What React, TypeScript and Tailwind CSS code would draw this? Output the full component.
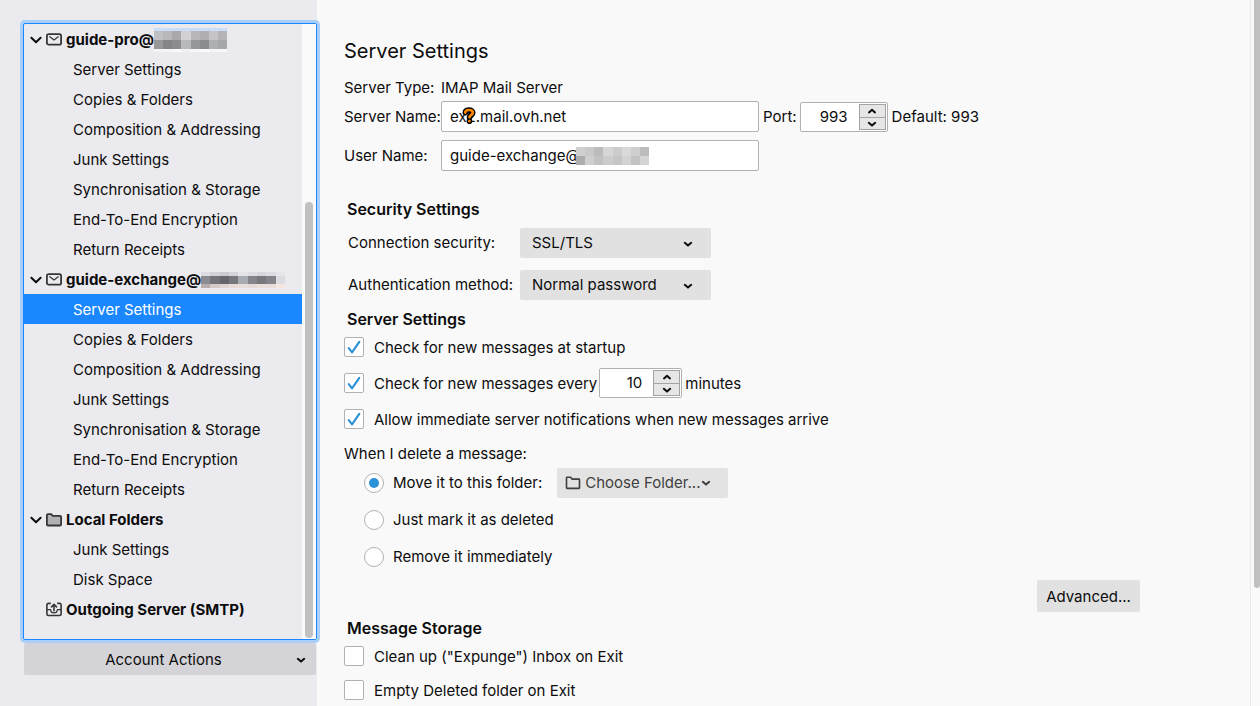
import { useState } from "react";
import type { ReactNode } from "react";

type IconKind = "mail" | "folder" | "outgoing";

type Account = {
  id: string;
  name: string;
  icon: IconKind;
  open?: boolean;
  mask?: ReactNode;
  pages: string[];
};

function Chevron({ className = "", up = false, wide = false }: { className?: string; up?: boolean; wide?: boolean }) {
  return (
    <svg
      viewBox="0 0 12 12"
      className={className}
      fill="none"
      stroke="currentColor"
      strokeWidth="2"
      strokeLinecap="round"
      strokeLinejoin="round"
      aria-hidden="true"
    >
      {wide ? <path d="M1.4 3.8 6 8.3l4.6-4.5" /> : <path d={up ? "M3 7.4 6 4.8l3 2.6" : "M2.8 4.8 6 7.6l3.2-2.8"} />}
    </svg>
  );
}

function AccountIcon({ kind }: { kind: IconKind }) {
  return (
    <svg viewBox="0 0 16 16" className="h-4 w-4 shrink-0" fill="none" stroke="#363638" strokeWidth="1.8" strokeLinejoin="round" strokeLinecap="round" aria-hidden="true">
      {kind === "mail" && (
        <>
          <rect x="0.9" y="2.1" width="14.2" height="10.6" rx="1.8" />
          <path d="M3.8 4.700 8 7.900 12.200 4.700" strokeWidth="1.2" />
        </>
      )}
      {kind === "folder" && (
        <path d="M.9 12.4V3.2c0-.7.4-1.1 1.1-1.1h3.2l1.6 1.7H14c.7 0 1.1.4 1.1 1.1v7.5c0 .7-.4 1.1-1.1 1.1H2c-.7 0-1.1-.4-1.1-1.1Z" fill="#b1b1b3" />
      )}
      {kind === "outgoing" && (
        <>
          <path d="M4.2 1.4H2.400C1.400 1.400.9 1.900.9 2.800v9.300c0 .9.5 1.400 1.500 1.400h11.200c1 0 1.500-.5 1.500-1.400V2.800c0-.9-.5-1.400-1.500-1.400h-1.800" strokeWidth="1.600" />
          <path d="M8 8.800V2.800M5.500 4.900 8 2.400l2.500 2.500" strokeWidth="1.600" />
          <path d="M1 7.600h3.300c.4 0 .5.3.5.7 0 1.500 1.400 2.600 3.200 2.600s3.200-1.100 3.200-2.600c0-.4.1-.7.5-.7H15" strokeWidth="1.200" />
        </>
      )}
    </svg>
  );
}

function Mosaic({ rows, heights, className }: { rows: string[][]; heights: number[]; className: string }) {
  const total = heights.reduce((a, b) => a + b, 0);
  const cols = Math.max(...rows.map((r) => r.length));
  let y = 0;
  return (
    <svg viewBox={`0 0 ${cols * 9} ${total}`} preserveAspectRatio="none" shapeRendering="crispEdges" className={className} aria-hidden="true">
      {rows.map((row, r) => {
        const top = y;
        y += heights[r];
        return row.map((c, i) => <rect key={`${r}-${i}`} x={i * 9} y={top} width="9" height={heights[r]} fill={c} />);
      })}
    </svg>
  );
}

const proMask = (
  <Mosaic
    className="h-6 w-[73px] shrink-0"
    heights={[3, 9, 9, 3]}
    rows={[
      ["#c9ddf8", "#c9ddf8", "#c9ddf8", "#c9ddf8", "#c9ddf8", "#c9ddf8", "#c9ddf8", "#c9ddf8"],
      ["#c0bfc1", "#b9b7b9", "#aaa8ab", "#d2d0d2", "#b8b6b8", "#b0aeb0", "#c6c4c6", "#b5b3b5"],
      ["#98989b", "#858588", "#8c8c8f", "#b8b9bd", "#97989b", "#8b8c8f", "#adafb1", "#a6a8aa"],
      ["#f3f2f6", "#f5f4f8", "#fafafe", "#f1f0f4", "#f6f5f9", "#fbfbff", "#f4f3f7", "#f7f6fa"],
    ]}
  />
);

const exchangeMask = (
  <Mosaic
    className="h-4 w-[84px] shrink-0"
    heights={[4, 8, 4]}
    rows={[
      ["#dddce0", "#d2d1d6", "#cbcacf", "#d5d4d9", "#e4e3e7", "#dedde1", "#d7d6da", "#dddce0", "#e6e5e9"],
      ["#8c8b91", "#737379", "#66676c", "#77787d", "#a9abb3", "#84858b", "#77787e", "#84858b", "#dddce0"],
      ["#b9adae", "#d6c9c8", "#e0d5d4", "#eadbd7", "#e9ded9", "#e6dad6", "#ecdfda", "#e9ddda", "#f5e7df"],
    ]}
  />
);

const userMask = (
  <Mosaic
    className="h-[18px] w-[73px] shrink-0"
    heights={[9, 9]}
    rows={[
      ["#d0d0d0", "#c9c9c9", "#bcbcbc", "#d6d6d6", "#cccccc", "#d9d9d9", "#cfcfcf", "#bcbcbc"],
      ["#adadad", "#cfcfcf", "#c2c2c2", "#cccccc", "#c5c5c5", "#d3d3d3", "#c3c3c3", "#d5d5d5"],
    ]}
  />
);

const mailPages = [
  "Server Settings",
  "Copies & Folders",
  "Composition & Addressing",
  "Junk Settings",
  "Synchronisation & Storage",
  "End-To-End Encryption",
  "Return Receipts",
];

const accounts: Account[] = [
  { id: "pro", name: "guide-pro@", icon: "mail", open: true, mask: proMask, pages: mailPages },
  { id: "exchange", name: "guide-exchange@", icon: "mail", open: true, mask: exchangeMask, pages: mailPages },
  { id: "local", name: "Local Folders", icon: "folder", open: true, pages: ["Junk Settings", "Disk Space"] },
  { id: "smtp", name: "Outgoing Server (SMTP)", icon: "outgoing", pages: [] },
];

function Sidebar() {
  const [selected, setSelected] = useState("exchange/Server Settings");
  return (
    <aside className="relative z-10 flex w-[317px] shrink-0 flex-col bg-[#ebeaee] pt-[23px] pb-[31px] pl-[23px]">
      <div className="relative z-10 flex min-h-0 flex-1 rounded-xs border border-[#1a87ff] shadow-[0_0_0_3px_#a8cffa]">
        <nav className="min-w-0 flex-1 overflow-hidden" aria-label="Accounts">
          <ul>
            {accounts.map((account) => (
              <li key={account.id}>
                <button type="button" className="flex h-[30px] w-full items-center pt-[2px] pl-[6px] text-left font-bold whitespace-nowrap">
                  <span className="flex w-4 shrink-0">{account.open && <Chevron wide className="h-3 w-3" />}</span>
                  <AccountIcon kind={account.icon} />
                  <span className="pl-1">{account.name}</span>
                  {account.mask}
                </button>
                <ul>
                  {account.pages.map((page) => {
                    const key = `${account.id}/${page}`;
                    return (
                      <li key={page}>
                        <button
                          type="button"
                          onClick={() => setSelected(key)}
                          className={
                            key === selected
                              ? "flex h-[30px] w-full items-center bg-[#1a87ff] pt-[2px] pl-[49px] whitespace-nowrap text-white"
                              : "flex h-[30px] w-full items-center pt-[2px] pl-[49px] whitespace-nowrap"
                          }
                        >
                          {page}
                        </button>
                      </li>
                    );
                  })}
                </ul>
              </li>
            ))}
          </ul>
        </nav>
        <div className="flex w-[14px] shrink-0 flex-col items-center justify-end bg-[#fafafa] pb-px">
          <div className="h-[71%] w-2 rounded-full bg-[#c1c1c1]" />
        </div>
      </div>
      <button type="button" className="mx-px mt-[3px] flex h-8 items-center rounded-xs bg-[#d4d3d7] pt-[2px] pr-[9px] pl-2">
        <span className="flex-1 text-center">Account Actions</span>
        <Chevron className="h-3 w-3" />
      </button>
    </aside>
  );
}

function Spinner({ id, initial, className }: { id: string; initial: number; className: string }) {
  const [value, setValue] = useState(initial);
  return (
    <span className={`flex h-[30px] shrink-0 items-stretch rounded-xs border border-[#b1b1b1] bg-white py-px pr-px ${className}`}>
      <input
        id={id}
        inputMode="numeric"
        value={value}
        onChange={(e) => setValue(Number(e.target.value) || 0)}
        className="min-w-0 flex-1 bg-transparent pr-[11px] text-right outline-none"
      />
      <span className="flex w-[27px] shrink-0 flex-col border border-[#a3a3a3] bg-[#e6e6e6]">
        <button type="button" aria-label="Increase" onClick={() => setValue(value + 1)} className="flex flex-1 items-center justify-center border-b border-[#a3a3a3]">
          <Chevron up className="h-3 w-3" />
        </button>
        <button type="button" aria-label="Decrease" onClick={() => setValue(value - 1)} className="flex flex-1 items-center justify-center">
          <Chevron className="h-3 w-3" />
        </button>
      </span>
    </span>
  );
}

function Dropdown({ id, options }: { id: string; options: string[] }) {
  return (
    <span className="relative flex w-[191px]">
      <select id={id} className="h-[30px] w-full appearance-none rounded-xs bg-[#e1e1e1] pr-8 pl-3 outline-none">
        {options.map((o) => (
          <option key={o}>{o}</option>
        ))}
      </select>
      <Chevron className="pointer-events-none absolute top-[10px] right-[17px] h-3 w-3" />
    </span>
  );
}

function Tick({ id, label, on = false }: { id: string; label: string; on?: boolean }) {
  return (
    <span className="flex h-5 items-center whitespace-nowrap">
      <span className="relative flex">
        <input id={id} type="checkbox" defaultChecked={on} className="peer h-5 w-5 appearance-none rounded-xs border border-[#b1b1b1] bg-white" />
        <svg viewBox="0 0 20 20" className="pointer-events-none absolute inset-0 hidden h-5 w-5 peer-checked:block" fill="none" stroke="#2a92d8" strokeLinecap="round" strokeLinejoin="round" strokeWidth="2.1" aria-hidden="true">
          <path d="M4.800 11.200 8 15.400 15.300 4.800" />
        </svg>
      </span>
      <label htmlFor={id} className="pt-[2px] pl-[10px]">{label}</label>
    </span>
  );
}

function Radio({ id, label, on = false }: { id: string; label: string; on?: boolean }) {
  return (
    <span className="flex items-center whitespace-nowrap">
      <span className="relative flex">
        <input id={id} name="delete-mode" type="radio" defaultChecked={on} className="peer h-5 w-5 appearance-none rounded-full border border-[#b1b1b1] bg-white" />
        <span className="pointer-events-none absolute inset-0 m-auto hidden h-[10px] w-[10px] rounded-full bg-[#2a92d8] peer-checked:block" />
      </span>
      <label htmlFor={id} className="pl-[9px]">{label}</label>
    </span>
  );
}

function SectionTitle({ children, className = "" }: { children: ReactNode; className?: string }) {
  return <h2 className={`pl-[3px] text-base leading-6 font-semibold ${className}`}>{children}</h2>;
}

function SettingsPanel() {
  return (
    <main className="min-w-0 flex-1 overflow-hidden pt-[35px] pr-[110px] pl-[27px]">
      <h1 className="text-xl leading-8">Server Settings</h1>

      <div className="mt-[9px] flex h-6 items-center whitespace-nowrap">
        <span className="w-[97px] shrink-0">Server Type:</span>
        <span>IMAP Mail Server</span>
      </div>
      <div className="mt-px flex h-[31px] items-center whitespace-nowrap">
        <label htmlFor="server-name" className="w-[97px] shrink-0">Server Name:</label>
        <span className="relative flex w-[318px]">
          <input id="server-name" defaultValue="ex2.mail.ovh.net" className="h-[31px] w-full rounded-xs border border-[#b1b1b1] bg-white px-2 outline-none" />
          <svg viewBox="0 0 16 20" className="pointer-events-none absolute top-[6px] left-5 h-5 w-4" aria-hidden="true">
            <g fill="none" strokeLinecap="round" strokeLinejoin="round">
              <path d="M4.300 5.600C4.300 3.900 6 3 8 3s3.800 1 3.800 2.800c0 2.200-3.300 2.400-3.300 4.400M8.400 14v.2" stroke="#000" strokeWidth="5.600" />
              <path d="M4.300 5.600C4.300 3.900 6 3 8 3s3.800 1 3.800 2.800c0 2.200-3.300 2.400-3.300 4.400M8.400 14v.2" stroke="#ff8a00" strokeWidth="2.700" />
            </g>
          </svg>
        </span>
        <label htmlFor="port" className="pl-1">Port:</label>
        <Spinner id="port" initial={993} className="ml-[3px] w-[88px]" />
        <span className="pl-1">Default: 993</span>
      </div>
      <div className="mt-2 flex h-[31px] items-center whitespace-nowrap">
        <label htmlFor="user-name" className="w-[97px] shrink-0">User Name:</label>
        <span className="flex h-[31px] w-[318px] items-center rounded-xs border border-[#b1b1b1] bg-white pl-2">
          <input id="user-name" defaultValue="guide-exchange@" className="w-[126px] bg-transparent outline-none" />
          {userMask}
        </span>
      </div>

      <SectionTitle className="mt-[26px]">Security Settings</SectionTitle>
      <div className="mt-[7px] flex h-[30px] items-center pl-1 whitespace-nowrap">
        <label htmlFor="connection" className="w-[172px] shrink-0">Connection security:</label>
        <Dropdown id="connection" options={["SSL/TLS", "STARTTLS", "None"]} />
      </div>
      <div className="mt-3 flex h-[30px] items-center pl-1 whitespace-nowrap">
        <label htmlFor="auth" className="w-[172px] shrink-0">Authentication method:</label>
        <Dropdown id="auth" options={["Normal password", "Encrypted password", "OAuth2"]} />
      </div>

      <SectionTitle className="mt-[7px]">Server Settings</SectionTitle>
      <div className="mt-[6px] flex flex-col gap-[11px]">
        <Tick id="startup" label="Check for new messages at startup" on />
        <div className="flex h-[30px] items-center">
          <Tick id="interval" label="Check for new messages every" on />
          <Spinner id="minutes" initial={10} className="ml-[2px] w-[83px]" />
          <label htmlFor="minutes" className="pt-[2px] pl-[3px]">minutes</label>
        </div>
        <Tick id="notify" label="Allow immediate server notifications when new messages arrive" on />
      </div>

      <fieldset className="mt-[13px]">
        <legend className="leading-6">When I delete a message:</legend>
        <div className="mt-[2px] flex flex-col gap-[7px] pl-5">
          <div className="flex h-[30px] items-center">
            <Radio id="move" label="Move it to this folder:" on />
            <button type="button" className="ml-[15px] flex h-[30px] w-[171px] items-center rounded-xs bg-[#e3e3e3] pl-2 whitespace-nowrap text-[#3f3f3f]">
              <svg viewBox="0 0 16 16" className="h-4 w-4 shrink-0" fill="none" stroke="currentColor" strokeWidth="1.6" strokeLinejoin="round" aria-hidden="true">
                <path d="M1.500 12.800V2.900c0-.4.2-.6.6-.6h3.500l1.600 1.800h6.700c.4 0 .6.2.6.6v8.100c0 .4-.2.6-.6.6H2.100c-.4 0-.6-.2-.6-.6Z" />
              </svg>
              <span className="pl-1">Choose Folder...</span>
              <Chevron className="h-3 w-3 shrink-0" />
            </button>
          </div>
          <div className="flex h-[30px] items-center">
            <Radio id="mark" label="Just mark it as deleted" />
          </div>
          <div className="flex h-[30px] items-center">
            <Radio id="remove" label="Remove it immediately" />
          </div>
        </div>
      </fieldset>

      <div className="mt-2 flex justify-end">
        <button type="button" className="h-8 w-[103px] rounded-xs bg-[#e1e1e1] pt-[2px]">Advanced...</button>
      </div>

      <SectionTitle className="mt-1">Message Storage</SectionTitle>
      <div className="mt-[6px] flex flex-col gap-[14px]">
        <Tick id="expunge" label={'Clean up ("Expunge") Inbox on Exit'} />
        <Tick id="empty" label="Empty Deleted folder on Exit" />
      </div>
    </main>
  );
}

export default function App() {
  return (
    <div className="flex h-screen overflow-hidden bg-[#f9f9f9] font-['Inter',sans-serif] text-[15px] leading-5 text-[#0c0c0d]">
      <Sidebar />
      <SettingsPanel />
      <div className="flex w-[10px] shrink-0 justify-end overflow-hidden border-l border-[#e8e8e8] bg-[#fafafa]">
        <div className="h-5/6 w-[6px] rounded-b-sm bg-[#c1c1c1]" />
      </div>
    </div>
  );
}
